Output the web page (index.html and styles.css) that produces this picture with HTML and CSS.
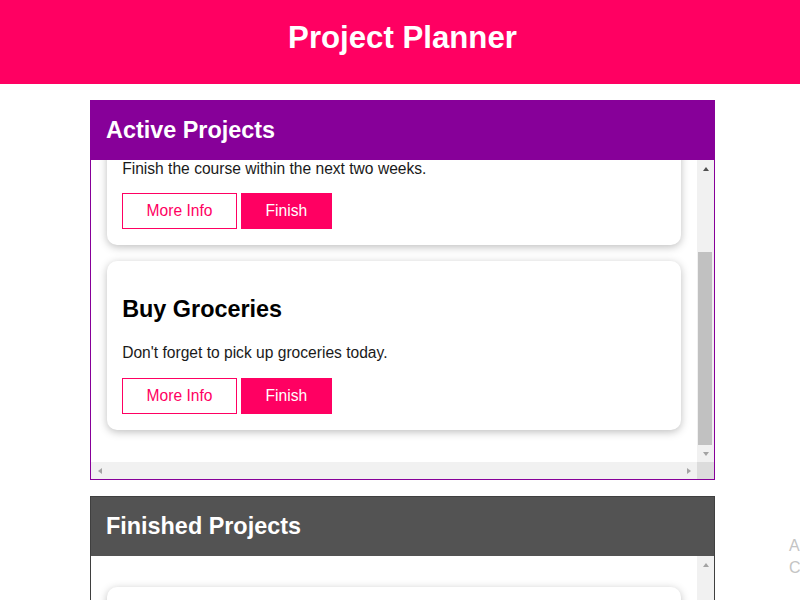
FILE: index.html
```html
<!DOCTYPE html>
<html lang="en">
<head>
<meta charset="UTF-8">
<title>Project Planner</title>
<link rel="stylesheet" href="styles.css">
<script src="app.js" defer></script>
</head>
<body>
<header class="main-header">
  <h1>Project Planner</h1>
</header>
<main class="main">
  <section class="projects projects--active">
    <header class="projects__head"><h2>Active Projects</h2></header>
    <div class="projects__body">
      <ul class="projects__list" id="active-list">
        <li class="card">
          <h2>Finish the Course</h2>
          <p>Finish the course within the next two weeks.</p>
          <button class="btn btn--alt">More Info</button>
          <button class="btn">Finish</button>
        </li>
        <li class="card">
          <h2>Buy Groceries</h2>
          <p>Don't forget to pick up groceries today.</p>
          <button class="btn btn--alt">More Info</button>
          <button class="btn">Finish</button>
        </li>
      </ul>
      <div class="vscroll">
        <span class="sb-btn sb-up sb-on"></span>
        <div class="vscroll__track vscroll__track--end"><div class="vscroll__thumb"></div></div>
        <span class="sb-btn sb-down"></span>
      </div>
      <div class="hscroll">
        <span class="sb-btn sb-left"></span>
        <div class="hscroll__track"></div>
        <span class="sb-btn sb-right"></span>
      </div>
      <div class="sb-corner"></div>
    </div>
  </section>
  <section class="projects projects--finished">
    <header class="projects__head"><h2>Finished Projects</h2></header>
    <div class="projects__body">
      <ul class="projects__list">
        <li class="card">
          <h2>Book Hotel</h2>
          <p>Academind conference takes place in December, don't forget to book a hotel.</p>
          <button class="btn btn--alt">More Info</button>
          <button class="btn">Activate</button>
        </li>
      </ul>
      <div class="vscroll">
        <span class="sb-btn sb-up"></span>
        <div class="vscroll__track"></div>
        <span class="sb-btn sb-down"></span>
      </div>
      <div class="hscroll">
        <span class="sb-btn sb-left"></span>
        <div class="hscroll__track"></div>
        <span class="sb-btn sb-right"></span>
      </div>
      <div class="sb-corner"></div>
    </div>
  </section>
</main>
<div class="edge-note">Activate Windows<br>Change settings to activate.</div>
</body>
</html>
```

FILE: styles.css
```css
* {
  box-sizing: border-box;
}

html {
  font-family: "Liberation Sans", Arial, sans-serif;
  font-size: 15.6px;
  overflow: hidden;
}

body {
  margin: 0;
  position: relative;
  min-height: 600px;
}

.main-header {
  height: 84px;
  display: flex;
  justify-content: center;
  align-items: center;
  background: #ff0062;
  padding-left: 5px;
  padding-bottom: 8px;
}

.main-header h1 {
  margin: 0;
  color: #fff;
  font-size: 31.2px;
  font-weight: bold;
}

.main {
  padding-left: 5px;
}

.projects {
  width: 625px;
  margin: 16px auto;
}

.projects--active {
  border: 1px solid #870099;
}

.projects--finished {
  border: 1px solid #3f3f3f;
}

.projects__head {
  padding: 16px 15px;
  height: 59px;
}

.projects--active .projects__head {
  background: #870099;
}

.projects--finished .projects__head {
  background: #535353;
}

.projects__head h2 {
  margin: 0;
  color: #fff;
  font-size: 23.4px;
  line-height: 27px;
}

.projects__body {
  display: grid;
  grid-template-columns: 1fr 17px;
  grid-template-rows: 302px 17px;
}

.projects__list {
  list-style: none;
  margin: 0;
  padding: 15.6px 15.6px 16.6px;
  overflow: hidden;
}

/* scrollbars */
.vscroll {
  display: flex;
  flex-direction: column;
  background: #f1f1f1;
}

.vscroll__track {
  flex: 1;
  display: flex;
  flex-direction: column;
}

.vscroll__track--end {
  justify-content: flex-end;
}

.vscroll__thumb {
  height: 193px;
  margin: 0 2px 0 1px;
  background: #c1c1c1;
}

.hscroll {
  display: flex;
  background: #f1f1f1;
}

.hscroll__track {
  flex: 1;
}

.sb-corner {
  background: #dcdcdc;
}

.sb-btn {
  width: 17px;
  height: 17px;
  flex: none;
  display: flex;
  align-items: center;
  justify-content: center;
}

.sb-btn::before {
  content: "";
  width: 0;
  height: 0;
  border: 0 solid transparent;
}

.sb-up::before {
  border-width: 0 3.5px 4px;
  border-bottom-color: #a3a3a3;
}

.sb-up.sb-on::before {
  border-bottom-color: #505050;
}

.sb-down::before {
  border-width: 4px 3.5px 0;
  border-top-color: #a3a3a3;
}

.sb-left::before {
  border-width: 3.5px 4px 3.5px 0;
  border-right-color: #a3a3a3;
}

.sb-right::before {
  border-width: 3.5px 0 3.5px 4px;
  border-left-color: #a3a3a3;
}

/* cards */
.card {
  margin: 15.6px 0;
  padding: 15.6px 15.6px 16.6px;
  background: #fff;
  border-radius: 10px;
  box-shadow: 0 2px 8px rgba(0, 0, 0, 0.26);
}

.card h2 {
  font-size: 23.4px;
  margin: 19.4px 0 21.4px;
  color: #000;
}

.card p {
  margin: 15.6px 0;
  color: #1a1a1a;
}

.btn {
  font: inherit;
  background: #ff0062;
  color: #fff;
  border: 1px solid #ff0062;
  padding: 7.8px 23.4px;
  cursor: pointer;
}

.btn--alt {
  background: #fff;
  color: #ff0062;
}

.edge-note {
  position: absolute;
  left: 789px;
  top: 535px;
  width: 300px;
  color: #c4c4c4;
  font-size: 16px;
  line-height: 22px;
}
```

FILE: app.js
```js
document.getElementById('active-list').scrollTop = 100000;
```
